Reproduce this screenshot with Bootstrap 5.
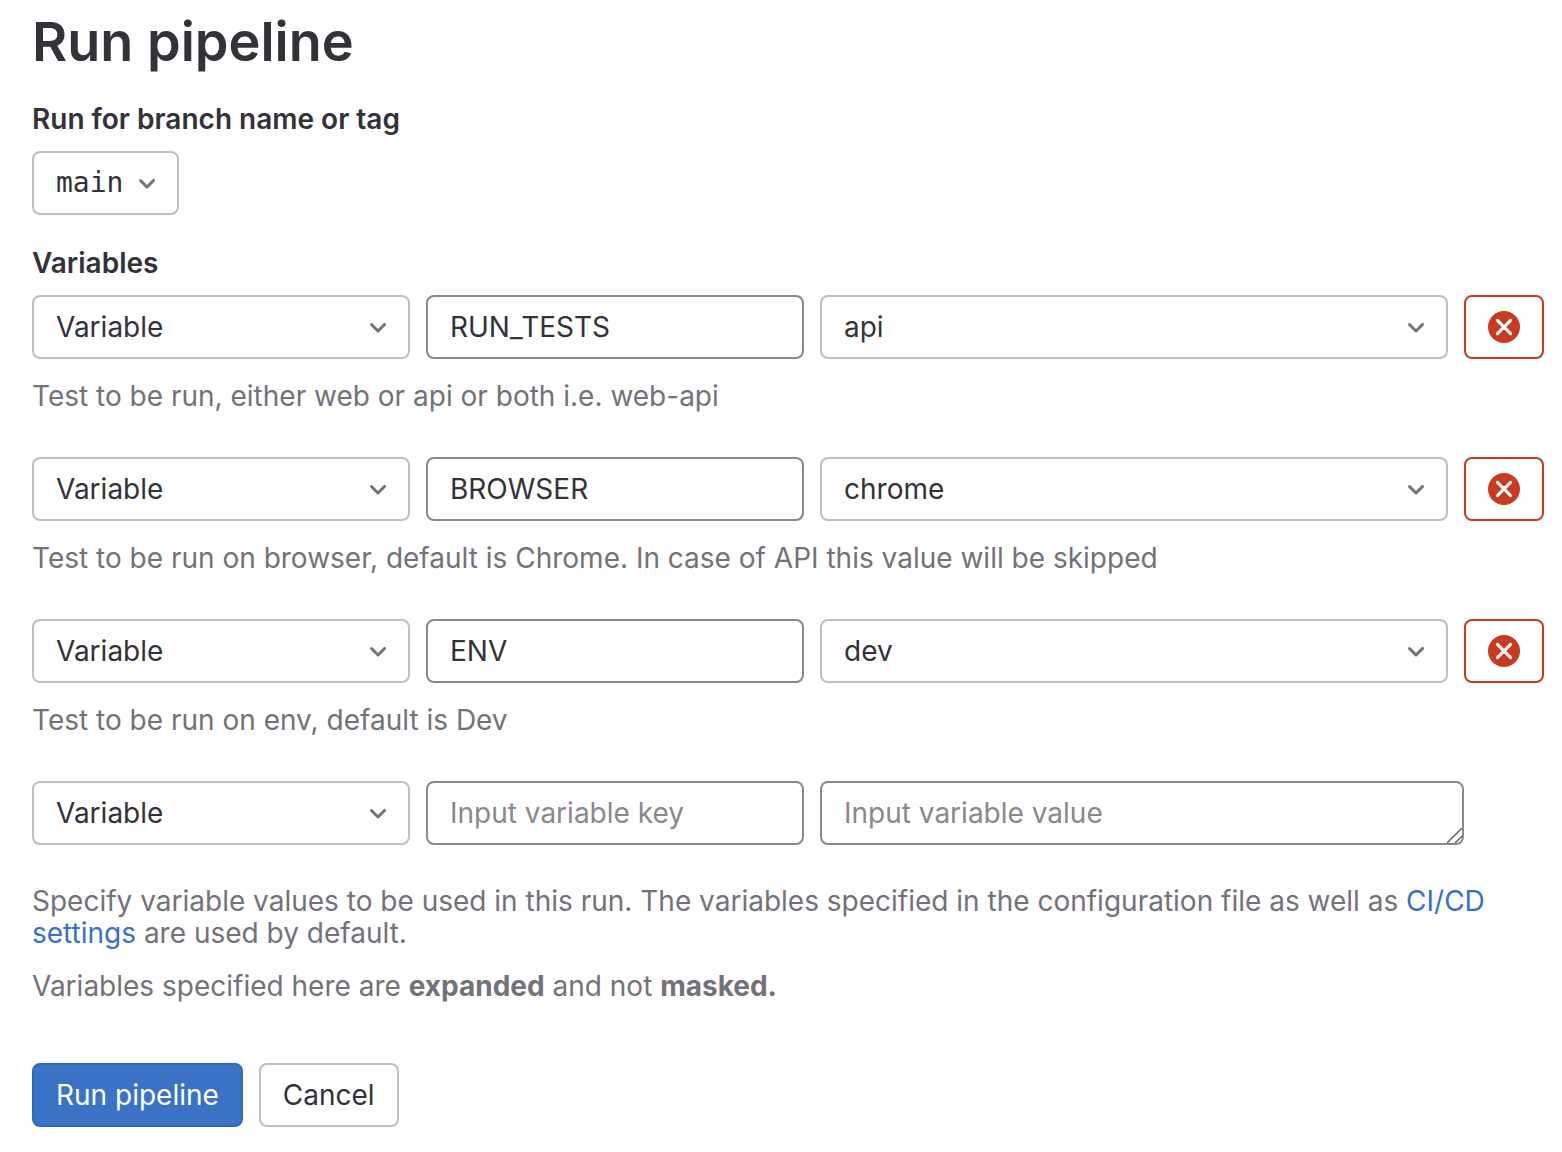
<!DOCTYPE html>
<html lang="en">
<head>
<meta charset="utf-8">
<meta name="viewport" content="width=device-width, initial-scale=1">
<title>Run pipeline</title>
<link href="https://cdn.jsdelivr.net/npm/bootstrap@5.3.0/dist/css/bootstrap.min.css" rel="stylesheet">
<style>
  :root {
    --ink: #333238;
    --muted: #737278;
    --line: #bfbfc3;
    --line-strong: #89888d;
    --danger: #c93a23;
    --link: #3771c8;
  }
  body {
    font-family: Inter, "Liberation Sans", sans-serif;
    font-size: 28px;
    line-height: 32px;
    color: var(--ink);
    background: #fff;
  }
  .page { padding: 10px 18px 24px 32px; }
  .page-title { font-size: 54px; line-height: 64px; font-weight: 600; margin-bottom: 29px; }
  .field-title { font-size: 28px; line-height: 32px; font-weight: 600; margin-bottom: 16px; }
  .form-select, .form-control, .btn {
    height: 64px;
    padding: 14px 22px;
    border-width: 2px;
    border-radius: 8px;
    font-size: 28px;
    line-height: 32px;
    color: var(--ink);
  }
  .form-select {
    border-color: var(--line);
    padding-right: 53px;
    background-image: url("data:image/svg+xml,%3csvg xmlns='http://www.w3.org/2000/svg' viewBox='0 0 16 16'%3e%3cpath fill='%23737278' d='M4.22 6.22a.75.75 0 0 1 1.06 0L8 8.94l2.72-2.72a.75.75 0 1 1 1.06 1.06l-3.25 3.25a.75.75 0 0 1-1.06 0L4.22 7.28a.75.75 0 0 1 0-1.06z'/%3e%3c/svg%3e");
    background-position: right 14px center;
    background-size: 32px 32px;
  }
  .form-control { border-color: var(--line-strong); min-height: 64px; }
  .form-control::placeholder { color: var(--line-strong); }
  textarea.form-control { overflow: hidden; resize: vertical; min-height: 64px; }
  textarea.form-control::-webkit-resizer {
    background: url("data:image/svg+xml,%3csvg xmlns='http://www.w3.org/2000/svg' viewBox='0 0 15 15'%3e%3cpath fill='none' stroke='%23555' stroke-width='1.3' d='M0 15 15 0M8 15 15 8'/%3e%3c/svg%3e") no-repeat right bottom / 15px 15px;
  }
  .branch-select { font-family: "DejaVu Sans Mono", monospace; }
  .var-row { gap: 16px; }
  .var-cell { flex: 0 0 25%; min-width: 0; }
  .var-row-new { padding-right: 80px; }
  .var-row-new .var-cell { flex-basis: calc(25% + 20px); }
  .var-value { flex: 1 1 0; min-width: 0; }
  .var-help { color: var(--muted); margin: 21px 0 45px; }
  .btn-remove { flex: 0 0 80px; border-color: var(--danger); color: var(--danger); background: #fff; }
  .btn-remove:hover { background: #fcf1ef; border-color: var(--danger); }
  .form-note { color: var(--muted); margin-bottom: 21px; }
  .form-note a { color: var(--link); }
  .btn-run { background: #3a72c5; border-color: #2f68bd; color: #fff; }
  .btn-run:hover { background: #2f68bd; color: #fff; }
  .btn-cancel { background: #fff; border-color: var(--line); }
  .btn-cancel:hover { border-color: var(--line-strong); }
  .notes { margin-top: 40px; margin-bottom: 61px; }
</style>
</head>
<body>
<svg class="d-none" aria-hidden="true">
  <symbol id="icon-clear" viewBox="0 0 32 32">
    <circle cx="16" cy="16" r="16" fill="currentColor"/>
    <path d="M9.4 9.4 22.6 22.6M22.6 9.4 9.4 22.6" fill="none" stroke="#fff" stroke-width="3" stroke-linecap="round"/>
  </symbol>
</svg>
<main class="page">
  <h1 class="page-title">Run pipeline</h1>
  <form>
    <label class="field-title d-block" for="branch">Run for branch name or tag</label>
    <select class="form-select branch-select w-auto" id="branch"><option>main</option></select>

    <fieldset class="mt-4 pt-2">
      <legend class="field-title">Variables</legend>

      <div class="var-row d-flex">
        <div class="var-cell">
          <select class="form-select" aria-label="Type"><option>Variable</option><option>File</option></select>
        </div>
        <div class="var-cell">
          <input class="form-control" type="text" value="RUN_TESTS" aria-label="Variable key" aria-describedby="help1">
        </div>
        <div class="var-value">
          <select class="form-select" aria-label="Variable value"><option>api</option><option>web</option><option>web-api</option></select>
        </div>
        <button class="btn btn-remove d-flex align-items-center justify-content-center" type="button" aria-label="Remove variable"><svg width="32" height="32" class="flex-shrink-0"><use href="#icon-clear"/></svg></button>
      </div>
      <p class="var-help" id="help1">Test to be run, either web or api or both i.e. web-api</p>

      <div class="var-row d-flex">
        <div class="var-cell">
          <select class="form-select" aria-label="Type"><option>Variable</option><option>File</option></select>
        </div>
        <div class="var-cell">
          <input class="form-control" type="text" value="BROWSER" aria-label="Variable key" aria-describedby="help2">
        </div>
        <div class="var-value">
          <select class="form-select" aria-label="Variable value"><option>chrome</option></select>
        </div>
        <button class="btn btn-remove d-flex align-items-center justify-content-center" type="button" aria-label="Remove variable"><svg width="32" height="32" class="flex-shrink-0"><use href="#icon-clear"/></svg></button>
      </div>
      <p class="var-help" id="help2">Test to be run on browser, default is Chrome. In case of API this value will be skipped</p>

      <div class="var-row d-flex">
        <div class="var-cell">
          <select class="form-select" aria-label="Type"><option>Variable</option><option>File</option></select>
        </div>
        <div class="var-cell">
          <input class="form-control" type="text" value="ENV" aria-label="Variable key" aria-describedby="help3">
        </div>
        <div class="var-value">
          <select class="form-select" aria-label="Variable value"><option>dev</option></select>
        </div>
        <button class="btn btn-remove d-flex align-items-center justify-content-center" type="button" aria-label="Remove variable"><svg width="32" height="32" class="flex-shrink-0"><use href="#icon-clear"/></svg></button>
      </div>
      <p class="var-help" id="help3">Test to be run on env, default is Dev</p>

      <div class="var-row var-row-new d-flex">
        <div class="var-cell">
          <select class="form-select" aria-label="Type"><option>Variable</option><option>File</option></select>
        </div>
        <div class="var-cell">
          <input class="form-control" type="text" placeholder="Input variable key" aria-label="Variable key">
        </div>
        <div class="var-value">
          <textarea class="form-control d-block" rows="1" placeholder="Input variable value" aria-label="Variable value"></textarea>
        </div>
      </div>
    </fieldset>

    <div class="notes">
      <p class="form-note">Specify variable values to be used in this run. The variables specified in the configuration file as well as <a class="text-decoration-none" href="#">CI/CD settings</a> are used by default.</p>
      <p class="form-note mb-0">Variables specified here are <strong>expanded</strong> and not <strong>masked.</strong></p>
    </div>

    <div class="d-flex gap-3">
      <button class="btn btn-run" type="submit">Run pipeline</button>
      <button class="btn btn-cancel" type="button">Cancel</button>
    </div>
  </form>
</main>
<script src="https://cdn.jsdelivr.net/npm/bootstrap@5.3.0/dist/js/bootstrap.bundle.min.js"></script>
</body>
</html>
